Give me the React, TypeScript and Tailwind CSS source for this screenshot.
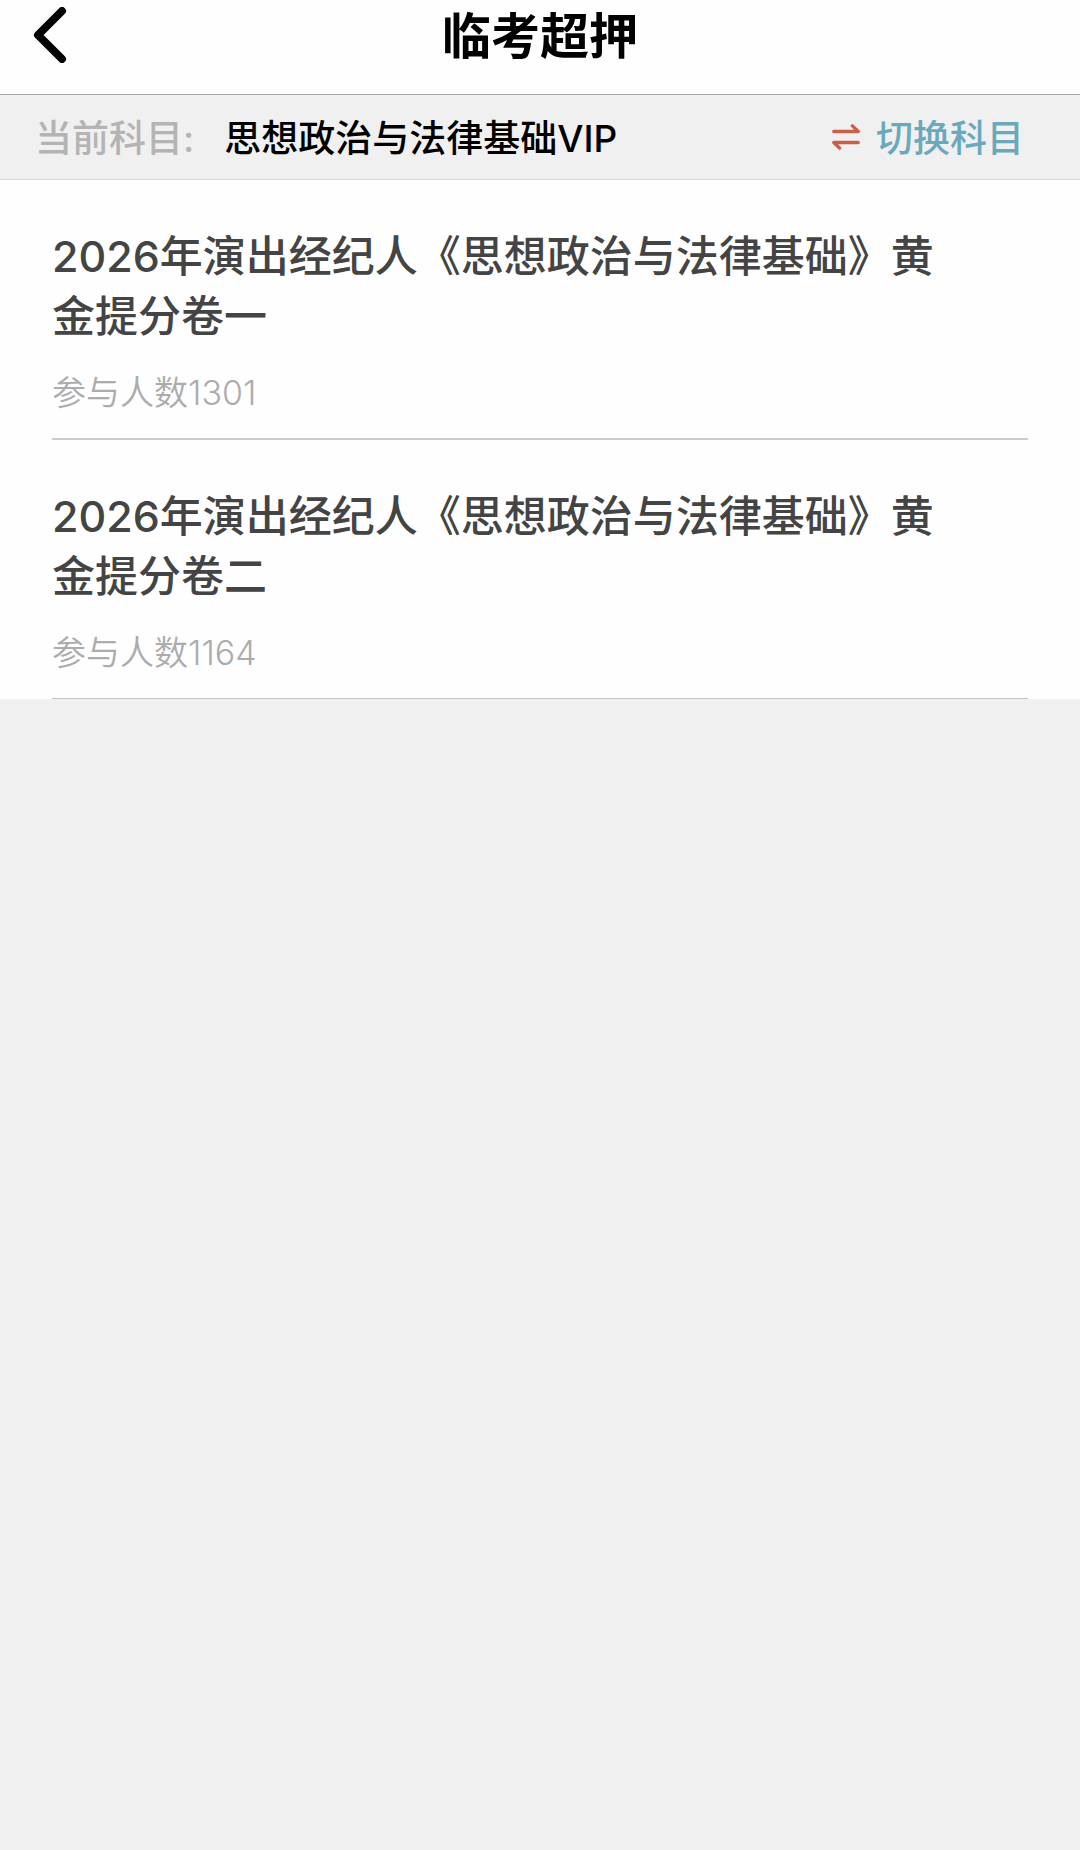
const subject = '思想政治与法律基础VIP';

const papers = [
  { id: 1, title: '2026年演出经纪人《思想政治与法律基础》黄金提分卷一', joined: 1301 },
  { id: 2, title: '2026年演出经纪人《思想政治与法律基础》黄金提分卷二', joined: 1164 },
];

function BackIcon() {
  return (
    <svg
      width="34"
      height="56"
      viewBox="0 0 34 56"
      fill="none"
      stroke="currentColor"
      strokeWidth="8"
      strokeLinecap="round"
      strokeLinejoin="round"
      aria-hidden="true"
    >
      <path d="M29 4 L5 28 L29 52" />
    </svg>
  );
}

function SwapIcon() {
  return (
    <svg
      width="28"
      height="26"
      viewBox="0 0 28 26"
      fill="none"
      stroke="currentColor"
      strokeWidth="3.4"
      strokeLinecap="round"
      strokeLinejoin="round"
      aria-hidden="true"
    >
      <path d="M1.8 7.5 H26.2 L20.4 1.9" />
      <path d="M26.2 18.5 H1.8 L7.6 24.1" />
    </svg>
  );
}

function Header() {
  return (
    <header className="grid h-[95px] grid-cols-[1fr_auto_1fr] items-start border-b border-[#a8a8a8] bg-[#fefefe] text-black">
      <button type="button" aria-label="返回" className="ml-[33px] mt-[7px] justify-self-start">
        <BackIcon />
      </button>
      <h1 className="text-[49px] leading-[74px] font-bold">临考超押</h1>
    </header>
  );
}

function SubjectBar() {
  return (
    <div className="flex h-[85px] items-center border-b border-[#d6d6d6] bg-[#f0f0f0] pt-1 pr-14 pl-[35px] text-[37px] leading-[56px]">
      <span className="font-medium text-[#b4b4b4]">当前科目:</span>
      <span className="ml-[30px] font-medium text-black">{subject}</span>
      <button type="button" className="ml-auto flex items-center gap-4 font-medium text-[#6aa9bc]">
        <span className="pb-1 text-[#c9604a]">
          <SwapIcon />
        </span>
        切换科目
      </button>
    </div>
  );
}

export default function App() {
  return (
    <div className="min-h-screen bg-[#f0f0f0] font-['Inter','Noto_Sans_CJK_SC',sans-serif]">
      <Header />
      <SubjectBar />
      <ul className="bg-[#fefefe] px-[52px]">
        {papers.map((paper) => (
          <li key={paper.id} className="border-b-2 border-[#cbcbcb] pt-[46px] pb-5 last:border-b last:border-[#bfc4c0]">
            <a href={`#paper-${paper.id}`} className="block">
              <h2 className="pr-20 text-[43px] leading-[60px] font-medium text-[#444444]">
                {paper.title}
              </h2>
              <p className="mt-[22px] text-[34px] leading-[50px] font-[350] text-[#acacac]">
                参与人数{paper.joined}
              </p>
            </a>
          </li>
        ))}
      </ul>
    </div>
  );
}
